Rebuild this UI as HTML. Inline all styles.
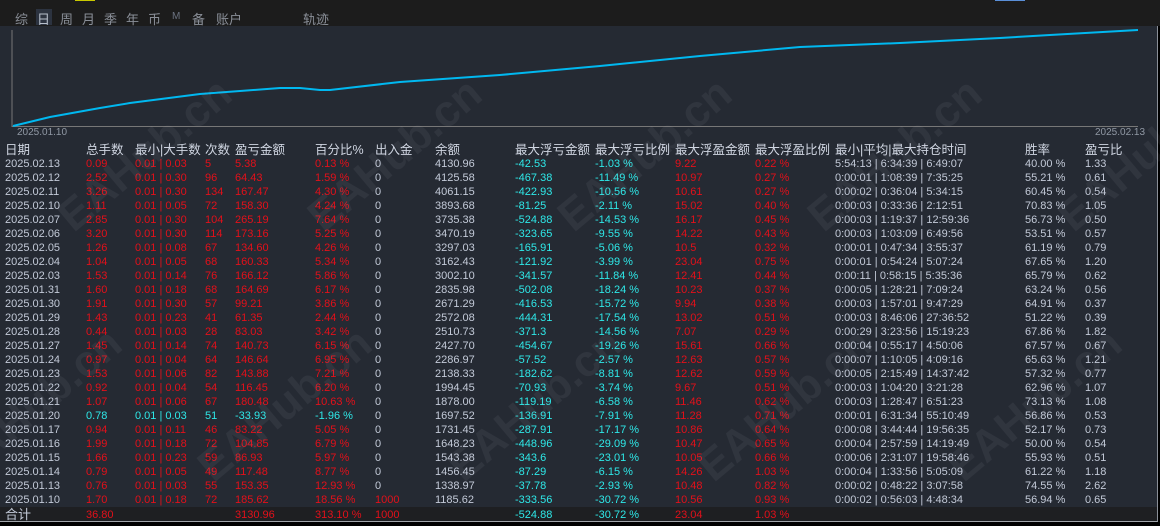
<!DOCTYPE html>
<html><head><meta charset="utf-8"><style>
body{margin:0;width:1160px;height:526px;background:#000;overflow:hidden;font-family:"Liberation Sans","Noto Sans CJK SC",sans-serif;font-size:11px;position:relative}
#top{position:absolute;left:0;top:0;width:1160px;height:26px;background:#1c1c1c}
#panel{position:absolute;left:0;top:26px;width:1157px;height:495px;background:#252a33;border-right:1px solid #8a8f98;border-bottom:1px solid #a0a4aa}
.tab{position:absolute;top:9px;color:#8a8f98;font-size:13px}
.r{position:absolute;left:0;width:1157px;height:14px;line-height:14px;color:#c3cad8}
.r span{position:absolute;white-space:nowrap}
.a{left:5px}.b{left:86px}.c{left:135px}.d{left:205px}.e{left:235px}.f{left:315px}.g{left:375px}.h{left:435px}.i{left:515px}.j{left:595px}.k{left:675px}.l{left:755px}.m{left:835px}.n{left:1025px}.o{left:1085px}
.R{color:#e3101a}.C{color:#2ee8e8}
.hd{font-size:12.5px;color:#d0d6e2}
#tot{position:absolute;left:0;top:507px;width:1157px;height:14px;background:#1e1f22}
.wm{position:absolute;font-size:44px;font-weight:bold;color:rgba(200,205,215,0.07);transform:rotate(-40deg);white-space:nowrap}
</style></head><body>
<div id="top">
<div class="tab" style="left:15px">综</div>
<div style="position:absolute;left:36px;top:9px;width:16px;height:16px;background:#2c3340"></div>
<div class="tab" style="left:37px;color:#b8c0cc">日</div>
<div class="tab" style="left:60px">周</div>
<div class="tab" style="left:82px">月</div>
<div class="tab" style="left:104px">季</div>
<div class="tab" style="left:126px">年</div>
<div class="tab" style="left:148px">币</div>
<div class="tab" style="left:172px;font-size:10px;top:11px;color:#6b7280">M</div>
<div class="tab" style="left:192px">备</div>
<div class="tab" style="left:216px">账户</div>
<div class="tab" style="left:303px">轨迹</div>
<div style="position:absolute;left:75px;top:0;width:20px;height:1px;background:#c8c800"></div>
<div style="position:absolute;left:995px;top:0;width:30px;height:1px;background:#5a8fd8"></div>
</div>
<div id="panel"></div>
<svg style="position:absolute;left:0;top:0" width="1160" height="140">
<line x1="12" y1="30" x2="12" y2="127" stroke="#777" stroke-width="1"/>
<line x1="12" y1="126.5" x2="1138" y2="126.5" stroke="#777" stroke-width="1"/>
<polyline fill="none" stroke="#00b8f0" stroke-width="2" points="13,126 50,117 100,108 130,103 200,94 280,88 300,88 320,90 330,90 400,82 500,75 600,66 700,56 800,47 900,43 1000,38 1050,35 1138,30"/>
</svg>
<div style="position:absolute;left:17px;top:127px;font-size:10px;color:#9098a4">2025.01.10</div>
<div style="position:absolute;left:1095px;top:127px;font-size:10px;color:#9098a4">2025.02.13</div>

<div class="r hd" style="top:143px"><span class="a">日期</span><span class="b">总手数</span><span class="c">最小|大手数</span><span class="d">次数</span><span class="e">盈亏金额</span><span class="f">百分比%</span><span class="g">出入金</span><span class="h">余额</span><span class="i">最大浮亏金额</span><span class="j">最大浮亏比例</span><span class="k">最大浮盈金额</span><span class="l">最大浮盈比例</span><span class="m">最小|平均|最大持仓时间</span><span class="n">胜率</span><span class="o">盈亏比</span></div>

<div class="r" style="top:157px"><span class="a">2025.02.13</span><span class="b R">0.09</span><span class="c R">0.01 | 0.03</span><span class="d R">5</span><span class="e R">5.38</span><span class="f R">0.13 %</span><span class="g">0</span><span class="h">4130.96</span><span class="i C">-42.53</span><span class="j C">-1.03 %</span><span class="k R">9.22</span><span class="l R">0.22 %</span><span class="m">5:54:13 | 6:34:39 | 6:49:07</span><span class="n">40.00 %</span><span class="o">1.33</span></div>
<div class="r" style="top:171px"><span class="a">2025.02.12</span><span class="b R">2.52</span><span class="c R">0.01 | 0.30</span><span class="d R">96</span><span class="e R">64.43</span><span class="f R">1.59 %</span><span class="g">0</span><span class="h">4125.58</span><span class="i C">-467.38</span><span class="j C">-11.49 %</span><span class="k R">10.97</span><span class="l R">0.27 %</span><span class="m">0:00:01 | 1:08:39 | 7:35:25</span><span class="n">55.21 %</span><span class="o">0.61</span></div>
<div class="r" style="top:185px"><span class="a">2025.02.11</span><span class="b R">3.26</span><span class="c R">0.01 | 0.30</span><span class="d R">134</span><span class="e R">167.47</span><span class="f R">4.30 %</span><span class="g">0</span><span class="h">4061.15</span><span class="i C">-422.93</span><span class="j C">-10.56 %</span><span class="k R">10.61</span><span class="l R">0.27 %</span><span class="m">0:00:02 | 0:36:04 | 5:34:15</span><span class="n">60.45 %</span><span class="o">0.54</span></div>
<div class="r" style="top:199px"><span class="a">2025.02.10</span><span class="b R">1.11</span><span class="c R">0.01 | 0.05</span><span class="d R">72</span><span class="e R">158.30</span><span class="f R">4.24 %</span><span class="g">0</span><span class="h">3893.68</span><span class="i C">-81.25</span><span class="j C">-2.11 %</span><span class="k R">15.02</span><span class="l R">0.40 %</span><span class="m">0:00:03 | 0:33:36 | 2:12:51</span><span class="n">70.83 %</span><span class="o">1.05</span></div>
<div class="r" style="top:213px"><span class="a">2025.02.07</span><span class="b R">2.85</span><span class="c R">0.01 | 0.30</span><span class="d R">104</span><span class="e R">265.19</span><span class="f R">7.64 %</span><span class="g">0</span><span class="h">3735.38</span><span class="i C">-524.88</span><span class="j C">-14.53 %</span><span class="k R">16.17</span><span class="l R">0.45 %</span><span class="m">0:00:03 | 1:19:37 | 12:59:36</span><span class="n">56.73 %</span><span class="o">0.50</span></div>
<div class="r" style="top:227px"><span class="a">2025.02.06</span><span class="b R">3.20</span><span class="c R">0.01 | 0.30</span><span class="d R">114</span><span class="e R">173.16</span><span class="f R">5.25 %</span><span class="g">0</span><span class="h">3470.19</span><span class="i C">-323.65</span><span class="j C">-9.55 %</span><span class="k R">14.22</span><span class="l R">0.43 %</span><span class="m">0:00:03 | 1:03:09 | 6:49:56</span><span class="n">53.51 %</span><span class="o">0.57</span></div>
<div class="r" style="top:241px"><span class="a">2025.02.05</span><span class="b R">1.26</span><span class="c R">0.01 | 0.08</span><span class="d R">67</span><span class="e R">134.60</span><span class="f R">4.26 %</span><span class="g">0</span><span class="h">3297.03</span><span class="i C">-165.91</span><span class="j C">-5.06 %</span><span class="k R">10.5</span><span class="l R">0.32 %</span><span class="m">0:00:01 | 0:47:34 | 3:55:37</span><span class="n">61.19 %</span><span class="o">0.79</span></div>
<div class="r" style="top:255px"><span class="a">2025.02.04</span><span class="b R">1.04</span><span class="c R">0.01 | 0.05</span><span class="d R">68</span><span class="e R">160.33</span><span class="f R">5.34 %</span><span class="g">0</span><span class="h">3162.43</span><span class="i C">-121.92</span><span class="j C">-3.99 %</span><span class="k R">23.04</span><span class="l R">0.75 %</span><span class="m">0:00:01 | 0:54:24 | 5:07:24</span><span class="n">67.65 %</span><span class="o">1.20</span></div>
<div class="r" style="top:269px"><span class="a">2025.02.03</span><span class="b R">1.53</span><span class="c R">0.01 | 0.14</span><span class="d R">76</span><span class="e R">166.12</span><span class="f R">5.86 %</span><span class="g">0</span><span class="h">3002.10</span><span class="i C">-341.57</span><span class="j C">-11.84 %</span><span class="k R">12.41</span><span class="l R">0.44 %</span><span class="m">0:00:11 | 0:58:15 | 5:35:36</span><span class="n">65.79 %</span><span class="o">0.62</span></div>
<div class="r" style="top:283px"><span class="a">2025.01.31</span><span class="b R">1.60</span><span class="c R">0.01 | 0.18</span><span class="d R">68</span><span class="e R">164.69</span><span class="f R">6.17 %</span><span class="g">0</span><span class="h">2835.98</span><span class="i C">-502.08</span><span class="j C">-18.24 %</span><span class="k R">10.23</span><span class="l R">0.37 %</span><span class="m">0:00:05 | 1:28:21 | 7:09:24</span><span class="n">63.24 %</span><span class="o">0.56</span></div>
<div class="r" style="top:297px"><span class="a">2025.01.30</span><span class="b R">1.91</span><span class="c R">0.01 | 0.30</span><span class="d R">57</span><span class="e R">99.21</span><span class="f R">3.86 %</span><span class="g">0</span><span class="h">2671.29</span><span class="i C">-416.53</span><span class="j C">-15.72 %</span><span class="k R">9.94</span><span class="l R">0.38 %</span><span class="m">0:00:03 | 1:57:01 | 9:47:29</span><span class="n">64.91 %</span><span class="o">0.37</span></div>
<div class="r" style="top:311px"><span class="a">2025.01.29</span><span class="b R">1.43</span><span class="c R">0.01 | 0.23</span><span class="d R">41</span><span class="e R">61.35</span><span class="f R">2.44 %</span><span class="g">0</span><span class="h">2572.08</span><span class="i C">-444.31</span><span class="j C">-17.54 %</span><span class="k R">13.02</span><span class="l R">0.51 %</span><span class="m">0:00:03 | 8:46:06 | 27:36:52</span><span class="n">51.22 %</span><span class="o">0.39</span></div>
<div class="r" style="top:325px"><span class="a">2025.01.28</span><span class="b R">0.44</span><span class="c R">0.01 | 0.03</span><span class="d R">28</span><span class="e R">83.03</span><span class="f R">3.42 %</span><span class="g">0</span><span class="h">2510.73</span><span class="i C">-371.3</span><span class="j C">-14.56 %</span><span class="k R">7.07</span><span class="l R">0.29 %</span><span class="m">0:00:29 | 3:23:56 | 15:19:23</span><span class="n">67.86 %</span><span class="o">1.82</span></div>
<div class="r" style="top:339px"><span class="a">2025.01.27</span><span class="b R">1.45</span><span class="c R">0.01 | 0.14</span><span class="d R">74</span><span class="e R">140.73</span><span class="f R">6.15 %</span><span class="g">0</span><span class="h">2427.70</span><span class="i C">-454.67</span><span class="j C">-19.26 %</span><span class="k R">15.61</span><span class="l R">0.66 %</span><span class="m">0:00:04 | 0:55:17 | 4:50:06</span><span class="n">67.57 %</span><span class="o">0.67</span></div>
<div class="r" style="top:353px"><span class="a">2025.01.24</span><span class="b R">0.97</span><span class="c R">0.01 | 0.04</span><span class="d R">64</span><span class="e R">146.64</span><span class="f R">6.95 %</span><span class="g">0</span><span class="h">2286.97</span><span class="i C">-57.52</span><span class="j C">-2.57 %</span><span class="k R">12.63</span><span class="l R">0.57 %</span><span class="m">0:00:07 | 1:10:05 | 4:09:16</span><span class="n">65.63 %</span><span class="o">1.21</span></div>
<div class="r" style="top:367px"><span class="a">2025.01.23</span><span class="b R">1.53</span><span class="c R">0.01 | 0.06</span><span class="d R">82</span><span class="e R">143.88</span><span class="f R">7.21 %</span><span class="g">0</span><span class="h">2138.33</span><span class="i C">-182.62</span><span class="j C">-8.81 %</span><span class="k R">12.62</span><span class="l R">0.59 %</span><span class="m">0:00:05 | 2:15:49 | 14:37:42</span><span class="n">57.32 %</span><span class="o">0.77</span></div>
<div class="r" style="top:381px"><span class="a">2025.01.22</span><span class="b R">0.92</span><span class="c R">0.01 | 0.04</span><span class="d R">54</span><span class="e R">116.45</span><span class="f R">6.20 %</span><span class="g">0</span><span class="h">1994.45</span><span class="i C">-70.93</span><span class="j C">-3.74 %</span><span class="k R">9.67</span><span class="l R">0.51 %</span><span class="m">0:00:03 | 1:04:20 | 3:21:28</span><span class="n">62.96 %</span><span class="o">1.07</span></div>
<div class="r" style="top:395px"><span class="a">2025.01.21</span><span class="b R">1.07</span><span class="c R">0.01 | 0.06</span><span class="d R">67</span><span class="e R">180.48</span><span class="f R">10.63 %</span><span class="g">0</span><span class="h">1878.00</span><span class="i C">-119.19</span><span class="j C">-6.58 %</span><span class="k R">11.46</span><span class="l R">0.62 %</span><span class="m">0:00:03 | 1:28:47 | 6:51:23</span><span class="n">73.13 %</span><span class="o">1.08</span></div>
<div class="r" style="top:409px"><span class="a">2025.01.20</span><span class="b C">0.78</span><span class="c C">0.01 | 0.03</span><span class="d C">51</span><span class="e C">-33.93</span><span class="f C">-1.96 %</span><span class="g">0</span><span class="h">1697.52</span><span class="i C">-136.91</span><span class="j C">-7.91 %</span><span class="k R">11.28</span><span class="l R">0.71 %</span><span class="m">0:00:01 | 6:31:34 | 55:10:49</span><span class="n">56.86 %</span><span class="o">0.53</span></div>
<div class="r" style="top:423px"><span class="a">2025.01.17</span><span class="b R">0.94</span><span class="c R">0.01 | 0.11</span><span class="d R">46</span><span class="e R">83.22</span><span class="f R">5.05 %</span><span class="g">0</span><span class="h">1731.45</span><span class="i C">-287.91</span><span class="j C">-17.17 %</span><span class="k R">10.86</span><span class="l R">0.64 %</span><span class="m">0:00:08 | 3:44:44 | 19:56:35</span><span class="n">52.17 %</span><span class="o">0.73</span></div>
<div class="r" style="top:437px"><span class="a">2025.01.16</span><span class="b R">1.99</span><span class="c R">0.01 | 0.18</span><span class="d R">72</span><span class="e R">104.85</span><span class="f R">6.79 %</span><span class="g">0</span><span class="h">1648.23</span><span class="i C">-448.96</span><span class="j C">-29.09 %</span><span class="k R">10.47</span><span class="l R">0.65 %</span><span class="m">0:00:04 | 2:57:59 | 14:19:49</span><span class="n">50.00 %</span><span class="o">0.54</span></div>
<div class="r" style="top:451px"><span class="a">2025.01.15</span><span class="b R">1.66</span><span class="c R">0.01 | 0.23</span><span class="d R">59</span><span class="e R">86.93</span><span class="f R">5.97 %</span><span class="g">0</span><span class="h">1543.38</span><span class="i C">-343.6</span><span class="j C">-23.01 %</span><span class="k R">10.05</span><span class="l R">0.66 %</span><span class="m">0:00:06 | 2:31:07 | 19:58:46</span><span class="n">55.93 %</span><span class="o">0.51</span></div>
<div class="r" style="top:465px"><span class="a">2025.01.14</span><span class="b R">0.79</span><span class="c R">0.01 | 0.05</span><span class="d R">49</span><span class="e R">117.48</span><span class="f R">8.77 %</span><span class="g">0</span><span class="h">1456.45</span><span class="i C">-87.29</span><span class="j C">-6.15 %</span><span class="k R">14.26</span><span class="l R">1.03 %</span><span class="m">0:00:04 | 1:33:56 | 5:05:09</span><span class="n">61.22 %</span><span class="o">1.18</span></div>
<div class="r" style="top:479px"><span class="a">2025.01.13</span><span class="b R">0.76</span><span class="c R">0.01 | 0.03</span><span class="d R">55</span><span class="e R">153.35</span><span class="f R">12.93 %</span><span class="g">0</span><span class="h">1338.97</span><span class="i C">-37.78</span><span class="j C">-2.93 %</span><span class="k R">10.48</span><span class="l R">0.82 %</span><span class="m">0:00:02 | 0:48:22 | 3:07:58</span><span class="n">74.55 %</span><span class="o">2.62</span></div>
<div class="r" style="top:493px"><span class="a">2025.01.10</span><span class="b R">1.70</span><span class="c R">0.01 | 0.18</span><span class="d R">72</span><span class="e R">185.62</span><span class="f R">18.56 %</span><span class="g R">1000</span><span class="h">1185.62</span><span class="i C">-333.56</span><span class="j C">-30.72 %</span><span class="k R">10.56</span><span class="l R">0.93 %</span><span class="m">0:00:02 | 0:56:03 | 4:48:34</span><span class="n">56.94 %</span><span class="o">0.65</span></div>
<div id="tot"></div>
<div class="r" style="top:508px"><span class="a" style="font-size:13px">合计</span><span class="b R">36.80</span><span class="e R">3130.96</span><span class="f R">313.10 %</span><span class="g R">1000</span><span class="i C">-524.88</span><span class="j C">-30.72 %</span><span class="k R">23.04</span><span class="l R">1.03 %</span></div>

<div class="wm" style="left:40px;top:130px">EAHub.cn</div>
<div class="wm" style="left:290px;top:130px">EAHub.cn</div>
<div class="wm" style="left:540px;top:130px">EAHub.cn</div>
<div class="wm" style="left:790px;top:130px">EAHub.cn</div>
<div class="wm" style="left:1040px;top:130px">EAHub.cn</div>
<div class="wm" style="left:-70px;top:380px">EAHub.cn</div>
<div class="wm" style="left:180px;top:380px">EAHub.cn</div>
<div class="wm" style="left:430px;top:380px">EAHub.cn</div>
<div class="wm" style="left:680px;top:380px">EAHub.cn</div>
<div class="wm" style="left:930px;top:380px">EAHub.cn</div>
</body></html>
